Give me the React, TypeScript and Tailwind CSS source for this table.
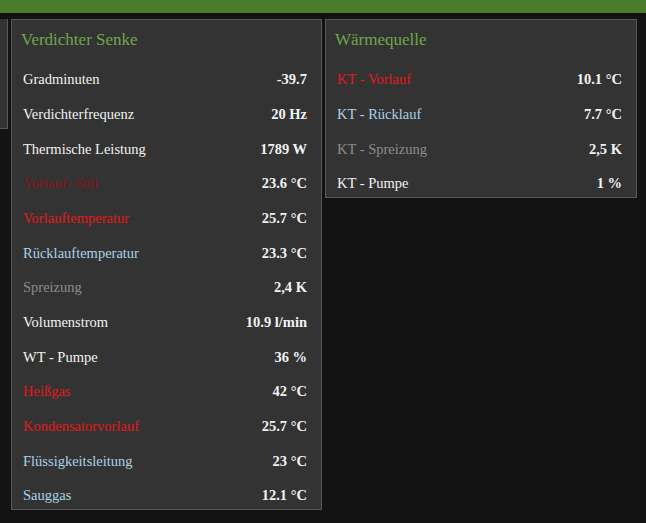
import React from 'react';

type Row = { label: string; value: string; tone: 'white' | 'red' | 'darkred' | 'blue' | 'gray' };

const senke: Row[] = [
  { label: 'Gradminuten', value: '-39.7', tone: 'white' },
  { label: 'Verdichterfrequenz', value: '20 Hz', tone: 'white' },
  { label: 'Thermische Leistung', value: '1789 W', tone: 'white' },
  { label: 'Vorlauf- Soll', value: '23.6 °C', tone: 'darkred' },
  { label: 'Vorlauftemperatur', value: '25.7 °C', tone: 'red' },
  { label: 'Rücklauftemperatur', value: '23.3 °C', tone: 'blue' },
  { label: 'Spreizung', value: '2,4 K', tone: 'gray' },
  { label: 'Volumenstrom', value: '10.9 l/min', tone: 'white' },
  { label: 'WT - Pumpe', value: '36 %', tone: 'white' },
  { label: 'Heißgas', value: '42 °C', tone: 'red' },
  { label: 'Kondensatorvorlauf', value: '25.7 °C', tone: 'red' },
  { label: 'Flüssigkeitsleitung', value: '23 °C', tone: 'blue' },
  { label: 'Sauggas', value: '12.1 °C', tone: 'blue' },
];

const quelle: Row[] = [
  { label: 'KT - Vorlauf', value: '10.1 °C', tone: 'red' },
  { label: 'KT - Rücklauf', value: '7.7 °C', tone: 'blue' },
  { label: 'KT - Spreizung', value: '2,5 K', tone: 'gray' },
  { label: 'KT - Pumpe', value: '1 %', tone: 'white' },
];

const toneClass = {
  white: 'text-[#f2f2f2]',
  red: 'text-[#e3181d]',
  darkred: 'text-[#8a1515]',
  blue: 'text-[#a9d2ea]',
  gray: 'text-[#8c8c8c]',
};

function Card({ title, rows, width }: { title: string; rows: Row[]; width: string }) {
  return (
    <div className={`${width} bg-[#333333] border border-[#585858] self-start`}>
      <div className="pl-[9px] pt-[10px] leading-[20px] text-[17px] text-[#6ea74a]">{title}</div>
      <div className="mt-[8.33px]">
        {rows.map((r) => (
          <div
            key={r.label}
            className="flex justify-between pl-[11px] pr-[14px] pt-[11px] pb-[3.67px] leading-[20px] text-[14.5px]"
          >
            <span className={toneClass[r.tone]}>{r.label}</span>
            <span className="font-bold text-[#f2f2f2]">{r.value}</span>
          </div>
        ))}
      </div>
    </div>
  );
}

export default function App() {
  return (
    <div
      className="w-[646px] h-[523px] overflow-hidden bg-[#121212]"
      style={{ fontFamily: '"Liberation Serif", "DejaVu Serif", serif' }}
    >
      <div className="h-[13px] bg-[#4b7b2d]" />
      <div className="flex gap-[3px] pt-[6px]">
        <div className="w-[8px] h-[110px] bg-[#333333] border-r border-b border-[#585858] shrink-0" />
        <Card title="Verdichter Senke" rows={senke} width="w-[311px]" />
        <Card title="Wärmequelle" rows={quelle} width="w-[312px]" />
      </div>
    </div>
  );
}
